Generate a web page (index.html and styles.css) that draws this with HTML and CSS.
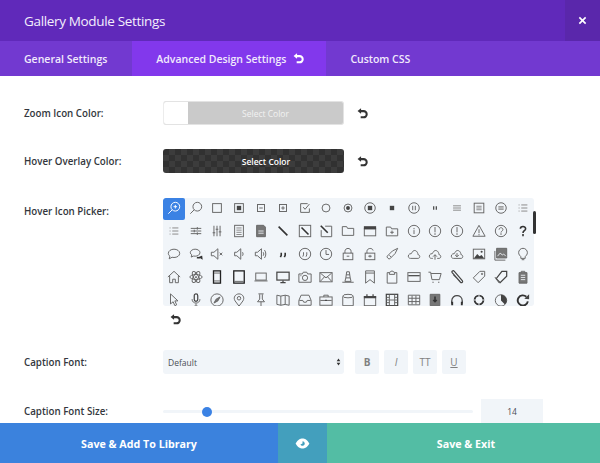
FILE: index.html
```html
<!DOCTYPE html>
<html lang="en">
<head>
<meta charset="utf-8">
<title>Gallery Module Settings</title>
<link rel="stylesheet" href="styles.css">
</head>
<body>
<svg class="defs" aria-hidden="true">
  <symbol id="reset" viewBox="0 0 12 12"><path class="rs" d="M3 3.4h4.200a3.400 3.400 0 0 1 0 6.800H4"/><path class="rf" d="M4.400 .4v6L.6 3.400z"/></symbol>
</svg>
<main class="modal">
  <header class="head">
    <h1 class="title">Gallery Module Settings</h1>
    <button class="close"><svg viewBox="0 0 10 10"><path d="M1.500 1.500l7 7M8.500 1.500l-7 7"/></svg></button>
  </header>
  <nav class="tabs">
    <a class="tab">General Settings</a>
    <a class="tab active">Advanced Design Settings <svg class="tab-reset"><use href="#reset"/></svg></a>
    <a class="tab">Custom CSS</a>
  </nav>
  <section class="body">
    <div class="row">
      <label class="label">Zoom Icon Color:</label>
      <div class="picker light"><span class="swatch"></span><span class="pick-text">Select Color</span></div>
      <svg class="reset"><use href="#reset"/></svg>
    </div>
    <div class="row gap-more">
      <label class="label">Hover Overlay Color:</label>
      <div class="picker dark"><span class="swatch"></span><span class="pick-text">Select Color</span></div>
      <svg class="reset"><use href="#reset"/></svg>
    </div>
    <div class="row top">
      <label class="label">Hover Icon Picker:</label>
      <div class="picker-col">
        <div class="icon-wrap">
        <div class="icons">
          <!-- row 1 -->
          <span class="cell on"><svg viewBox="0 0 16 16"><circle cx="9.500" cy="6.500" r="5"/><path d="M6 10L1.500 14.500M7.500 6.500h4M9.500 4.500v4"/></svg></span>
          <span class="cell"><svg viewBox="0 0 16 16"><circle cx="9.500" cy="6.500" r="5"/><path d="M6 10L1.500 14.500"/></svg></span>
          <span class="cell"><svg viewBox="0 0 16 16"><rect x="3" y="3" width="10" height="10"/></svg></span>
          <span class="cell"><svg viewBox="0 0 16 16"><rect x="3" y="3" width="10" height="10"/><rect class="f" x="5.500" y="5.500" width="5" height="5"/></svg></span>
          <span class="cell"><svg viewBox="0 0 16 16"><rect x="4" y="4" width="8" height="8"/><path d="M6 8h4"/></svg></span>
          <span class="cell"><svg viewBox="0 0 16 16"><rect x="4" y="4" width="8" height="8"/><path d="M6 8h4M8 6v4"/></svg></span>
          <span class="cell"><svg viewBox="0 0 16 16"><path d="M13 8.500V13H3V3h8M6 7l2 2.500 5-6"/></svg></span>
          <span class="cell"><svg viewBox="0 0 16 16"><circle cx="8" cy="8" r="4.500"/></svg></span>
          <span class="cell"><svg viewBox="0 0 16 16"><circle cx="8" cy="8" r="4.500"/><circle class="f" cx="8" cy="8" r="2.200"/></svg></span>
          <span class="cell"><svg viewBox="0 0 16 16"><circle cx="8" cy="8" r="6"/><rect class="f" x="5.500" y="5.500" width="5" height="5"/></svg></span>
          <span class="cell"><svg viewBox="0 0 16 16"><rect class="f" x="5.500" y="5.500" width="5" height="5"/></svg></span>
          <span class="cell"><svg viewBox="0 0 16 16"><circle cx="8" cy="8" r="6"/><path d="M6.500 5.500v5M9.500 5.500v5"/></svg></span>
          <span class="cell"><svg viewBox="0 0 16 16"><path class="h" d="M6.500 6v4M9.500 6v4"/></svg></span>
          <span class="cell"><svg viewBox="0 0 16 16"><path class="lt" d="M3.500 5.500h9M3.500 8h9M3.500 10.500h9"/></svg></span>
          <span class="cell"><svg viewBox="0 0 16 16"><rect x="2.500" y="2.500" width="11" height="11"/><path class="lt" d="M5 6h6M5 8h6M5 10h6"/></svg></span>
          <span class="cell"><svg viewBox="0 0 16 16"><circle cx="8" cy="8" r="6"/><path class="lt" d="M5 6.500h6M5 8h6M5 9.500h6"/></svg></span>
          <span class="cell"><svg viewBox="0 0 16 16"><path class="lt" d="M3 4.500h1M6 4.500h7M3 8h1M6 8h7M3 11.500h1M6 11.500h7"/></svg></span>
          <!-- row 2 -->
          <span class="cell"><svg viewBox="0 0 16 16"><path class="lt" d="M3 4.500h1M6 4.500h7M3 8h1M6 8h7M3 11.500h1M6 11.500h7"/></svg></span>
          <span class="cell"><svg viewBox="0 0 16 16"><path d="M2 5h12M2 8h12M2 11h12"/><path d="M9.500 3.500v3M6 6.500v3M9.500 9.500v3"/></svg></span>
          <span class="cell"><svg viewBox="0 0 16 16"><path d="M4.500 2v12M8 2v12M11.500 2v12M3 10h3M6.500 6h3M10 9h3"/></svg></span>
          <span class="cell"><svg viewBox="0 0 16 16"><rect x="3" y="1.500" width="10" height="13"/><path class="lt" d="M5 4.500h6M5 7h6M5 9.500h6M5 12h6"/></svg></span>
          <span class="cell"><svg viewBox="0 0 16 16"><path class="g" d="M3 1.500h8l2 2v11H3z"/><path class="w" d="M5 8h6M5 10.500h6"/></svg></span>
          <span class="cell"><svg viewBox="0 0 16 16"><path class="b" d="M3 3l10 10"/></svg></span>
          <span class="cell"><svg viewBox="0 0 16 16"><rect x="1.500" y="1.500" width="13" height="13"/><path class="b" d="M4 4l8 8"/></svg></span>
          <span class="cell"><svg viewBox="0 0 16 16"><path d="M7 2.500h7.500v12h-12V7"/><path class="b" d="M2 2l8 8"/></svg></span>
          <span class="cell"><svg viewBox="0 0 16 16"><path d="M1.500 13V3h5l1 2h7v8z"/></svg></span>
          <span class="cell"><svg viewBox="0 0 16 16"><rect x="1.500" y="5.500" width="13" height="8"/><rect class="f" x="1" y="2.500" width="14" height="3.500"/></svg></span>
          <span class="cell"><svg viewBox="0 0 16 16"><path d="M1.500 13.500v-10h5l1 2h7v8zM8 7.500v4M6 9.500h4"/></svg></span>
          <span class="cell"><svg viewBox="0 0 16 16"><circle cx="8" cy="8" r="6.500"/><path d="M8 4.500v1.500M8 7v4.500"/></svg></span>
          <span class="cell"><svg viewBox="0 0 16 16"><circle cx="8" cy="8" r="6.500"/><path d="M8 3.500V9.500M8 10.500v2"/></svg></span>
          <span class="cell"><svg viewBox="0 0 16 16"><circle cx="8" cy="8" r="6.500"/><path d="M8 3.500V9.500M8 10.500v2"/></svg></span>
          <span class="cell"><svg viewBox="0 0 16 16"><path d="M8 1.500L15 14H1zM8 6v4.500M8 11.500v1.500"/></svg></span>
          <span class="cell"><svg viewBox="0 0 16 16"><circle cx="8" cy="8" r="6.500"/><path d="M5.800 6.500c0-3 4.400-3 4.400-.1 0 1.700-2.200 1.600-2.200 3.400M8 10.500v2"/></svg></span>
          <span class="cell"><svg viewBox="0 0 16 16"><path class="b" d="M5 5.500c0-3.600 6-3.600 6-.1 0 2.300-3 2.200-3 4.800M8 11.500v2.500"/></svg></span>
          <!-- row 3 -->
          <span class="cell"><svg viewBox="0 0 16 16"><path d="M8 2.500c3.500 0 6.500 2 6.500 4.800S11.500 12 8 12c-.8 0-1.500-.1-2.200-.3L2.500 13.500l.8-3C2.200 9.600 1.500 8.500 1.500 7.300 1.500 4.500 4.500 2.500 8 2.500z"/></svg></span>
          <span class="cell"><svg viewBox="0 0 16 16"><path d="M7 2.500c3 0 5.500 1.700 5.500 4S10 10.500 7 10.500c-.6 0-1.100 0-1.600-.2L2.500 11.500l.7-2.500C2.100 8.300 1.500 7.500 1.500 6.500c0-2.300 2.500-4 5.500-4z"/><path class="b" d="M9 12c1.500.4 3 .2 4-.3l1.500 1-.3-2.500"/></svg></span>
          <span class="cell"><svg viewBox="0 0 16 16"><path d="M1.500 6H4.500L9 2v12L4.500 10H1.500zM11 6.500l3 3M14 6.500l-3 3"/></svg></span>
          <span class="cell"><svg viewBox="0 0 16 16"><path d="M3 6H5.500L10 2v12L5.500 10H3zM12 6c.8 1.200.8 2.800 0 4"/></svg></span>
          <span class="cell"><svg viewBox="0 0 16 16"><path d="M1.500 6H4L8.500 2v12L4 10H1.500zM10.500 6c.8 1.200.8 2.800 0 4M12 3.500c2 2.500 2 6.500 0 9"/></svg></span>
          <span class="cell"><svg viewBox="0 0 16 16"><path class="b" d="M6 6.500v3L5 11.500M10.500 6.500v3l-1 2"/></svg></span>
          <span class="cell"><svg viewBox="0 0 16 16"><circle cx="8" cy="8" r="6.500"/><path d="M6.300 6v3L5.500 11M10 6v3l-.8 2"/></svg></span>
          <span class="cell"><svg viewBox="0 0 16 16"><circle cx="8" cy="8" r="6.500"/><path d="M8 3.500V8.500h3.500"/></svg></span>
          <span class="cell"><svg viewBox="0 0 16 16"><rect x="2.500" y="7" width="11" height="7.500"/><path d="M4.500 7V5c0-4.500 7-4.500 7 0v2M6.500 10.500h3"/></svg></span>
          <span class="cell"><svg viewBox="0 0 16 16"><rect x="2.500" y="7" width="11" height="7.500"/><path d="M4.500 7V5c0-4 6.300-4.500 7-1M6 10.500h4M8 9v3"/></svg></span>
          <span class="cell"><svg viewBox="0 0 16 16"><path d="M14.500 1.500L8.500 4.500 2.500 10.500c-1 1 2 4 3 3l6-6zM5 9.500l2 2"/></svg></span>
          <span class="cell"><svg viewBox="0 0 16 16"><path d="M4 13h8.500c2.800 0 2.800-4 0-4.300C12.500 5.500 9.500 2.500 6.800 4.800 5.500 6 5.500 7 5 7.500 .5 7.500 .5 13 4 13z"/></svg></span>
          <span class="cell"><svg viewBox="0 0 16 16"><path d="M5.500 13H4C.5 13 .5 7.500 5 7.500c.5-.5.5-1.500 1.800-2.700 2.700-2.300 5.700.7 5.700 3.900 2.800.3 2.800 4.300 0 4.300h-2M8 14.500V9M5.800 11L8 8.800l2.200 2.200"/></svg></span>
          <span class="cell"><svg viewBox="0 0 16 16"><path d="M4 13C.5 13 .5 7.500 5 7.500c.5-.5.5-1.500 1.800-2.700 2.700-2.300 5.700.7 5.700 3.900 2.800.3 2.800 4.300 0 4.300zM8 7v4M5.800 9L8 11.200 10.200 9"/></svg></span>
          <span class="cell"><svg viewBox="0 0 16 16"><rect x="1.500" y="2.500" width="13" height="11"/><path class="f" d="M2 13l4-5 2.500 2.500L11 9l3 4z"/><circle class="f" cx="11" cy="5.500" r="1.200"/></svg></span>
          <span class="cell"><svg viewBox="0 0 16 16"><path class="g" d="M3 1.500h11.500v11H3z"/><path class="w" d="M4 10.500l3-3.500 2.500 2 1.500-1 2.500 2.500"/><path d="M1 4.500v10.500h12"/></svg></span>
          <span class="cell"><svg viewBox="0 0 16 16"><path d="M5.500 11C4.500 10 3 8.500 3 6.500a5 5 0 0 1 10 0c0 2-1.500 3.500-2.500 4.500v2h-5zM6.500 14.500h3"/></svg></span>
          <!-- row 4 -->
          <span class="cell"><svg viewBox="0 0 16 16"><path d="M8 1.500L15 8M8 1.500L1 8M3 6.500v8h3.500v-4h3v4H13v-8"/></svg></span>
          <span class="cell"><svg viewBox="0 0 16 16"><ellipse cx="8" cy="8" rx="7" ry="2.800"/><ellipse cx="8" cy="8" rx="7" ry="2.800" transform="rotate(60 8 8)"/><ellipse cx="8" cy="8" rx="7" ry="2.800" transform="rotate(120 8 8)"/><circle class="f" cx="8" cy="8" r="1"/></svg></span>
          <span class="cell"><svg viewBox="0 0 16 16"><rect class="h1" x="4" y="1" width="8" height="14"/><path d="M4.500 3.500h7M4.500 12.500h7"/></svg></span>
          <span class="cell"><svg viewBox="0 0 16 16"><rect class="h1" x="2" y="1" width="12" height="14"/><path d="M2.500 13h11"/></svg></span>
          <span class="cell"><svg viewBox="0 0 16 16"><rect x="2" y="3.500" width="12" height="8"/><path d="M.5 12.500h15"/></svg></span>
          <span class="cell"><svg viewBox="0 0 16 16"><rect class="h" x="1" y="2.500" width="14" height="9"/><path class="h" d="M8 12v2M5 14.500h6"/></svg></span>
          <span class="cell"><svg viewBox="0 0 16 16"><path d="M1 4.500h4l1-2h4l1 2h4v9.500H1z"/><circle cx="8" cy="9" r="3"/><path class="lt" d="M2.500 6.500h1.500"/></svg></span>
          <span class="cell"><svg viewBox="0 0 16 16"><rect x="1" y="3" width="14" height="10.500"/><path d="M1.500 3.500L8 9l6.500-5.500M1.500 13l5-5.500M14.500 13l-5-5.500"/></svg></span>
          <span class="cell"><svg viewBox="0 0 16 16"><path d="M6.500 2h3l1 7h-5zM5.500 9l-1 4h7l-1-4M1.500 14h13M6 5.500h4"/></svg></span>
          <span class="cell"><svg viewBox="0 0 16 16"><path d="M3 1h10v14l-5-4-5 4zM3 3.500h10"/></svg></span>
          <span class="cell"><svg viewBox="0 0 16 16"><path d="M5 3H2.500v12h11V3H11M5 5V2.800L8 1l3 1.800V5z"/></svg></span>
          <span class="cell"><svg viewBox="0 0 16 16"><rect x="1" y="3" width="14" height="10"/><path class="h" d="M1.500 6.500h13"/></svg></span>
          <span class="cell"><svg viewBox="0 0 16 16"><path d="M.5 2.500H3L4.500 11h8.500l2-7H3.500M5 14h1.500M11.500 14H13"/></svg></span>
          <span class="cell"><svg viewBox="0 0 16 16"><path class="h" d="M2.500 3l9.500 11c1.500 1.500 3-.5 2-2L5 1.500C3.500 0 1.500 1.500 2.500 3zM4 5.500l7 7"/></svg></span>
          <span class="cell"><svg viewBox="0 0 16 16"><path d="M9 1.500h5.500V7L7 14.500 1.500 9z"/><circle cx="11.500" cy="4.500" r=".8"/></svg></span>
          <span class="cell"><svg viewBox="0 0 16 16"><path class="h" d="M9 1.500h5.500V7L7 14.500 2.500 10z"/><path d="M1 8l5 7"/></svg></span>
          <span class="cell"><svg viewBox="0 0 16 16"><path class="g" d="M3.500 3h9v12h-9z"/><path d="M6 3V1.500h4V3"/><path class="w" d="M5.500 6h5M5.500 8.500h5M5.500 11h5"/></svg></span>
          <!-- row 5 -->
          <span class="cell"><svg viewBox="0 0 16 16"><path d="M4 1l8.500 8H9l2 4.500-2 1-2-4.500-3 2.500z"/></svg></span>
          <span class="cell"><svg viewBox="0 0 16 16"><rect class="h" x="6" y="1" width="4" height="8.500" rx="2"/><path d="M3.500 7c0 6 9 6 9 0M8 12v3M6 15h4"/></svg></span>
          <span class="cell"><svg viewBox="0 0 16 16"><circle cx="8" cy="8" r="7"/><path class="g" d="M11.500 4.500L9 9 4.500 11.500 7 7z"/></svg></span>
          <span class="cell"><svg viewBox="0 0 16 16"><path d="M8 15L3.500 9C1 5 4 1 8 1s7 4 4.500 8z"/><circle cx="8" cy="6" r="2"/></svg></span>
          <span class="cell"><svg viewBox="0 0 16 16"><path d="M5 1h6M6.500 1.500v5.500L4 10h8L9.500 7V1.500M8 10v5"/></svg></span>
          <span class="cell"><svg viewBox="0 0 16 16"><path d="M1 2.500l4.500 1 5-1 4.500 1V14l-4.500-1-5 1L1 13zM5.500 3.500V14M10.500 2.500V13"/></svg></span>
          <span class="cell"><svg viewBox="0 0 16 16"><path d="M1 8.500l2.500-6h9l2.500 6V14H1zM1.500 8.500h4l1 2h3l1-2h4"/></svg></span>
          <span class="cell"><svg viewBox="0 0 16 16"><rect x="1" y="4.500" width="14" height="9.500"/><path d="M5.500 4.500v-2h5v2M1.500 8.500h13"/><path class="h" d="M7 8.500h2"/></svg></span>
          <span class="cell"><svg viewBox="0 0 16 16"><path d="M2 4v10.500h12V4"/><ellipse cx="8" cy="3.500" rx="6" ry="2"/></svg></span>
          <span class="cell"><svg viewBox="0 0 16 16"><rect x="1.500" y="4" width="13" height="10.500"/><rect class="f" x="1" y="3.500" width="14" height="2.500"/><path class="h" d="M4.500 1.500V4M11.500 1.500V4"/></svg></span>
          <span class="cell"><svg viewBox="0 0 16 16"><rect class="h" x="1.500" y="1.500" width="13" height="13"/><path d="M5 2v12M11 2v12M5.500 8h5M2 5h3M2 8h3M2 11h3M11 5h3M11 8h3M11 11h3"/></svg></span>
          <span class="cell"><svg viewBox="0 0 16 16"><path d="M1.500 2.500h13v11h-13zM1.500 6h13M1.500 9.800h13M5.800 3v10M10.200 3v10"/></svg></span>
          <span class="cell"><svg viewBox="0 0 16 16"><path class="g" d="M2.500 1.500h11v13h-11z"/><path class="b" d="M8 4v5.500M6 8l2 2 2-2"/></svg></span>
          <span class="cell"><svg viewBox="0 0 16 16"><path class="h" d="M2 12V9c0-8 12-8 12 0v3"/><path class="h2" d="M2.500 10v4M13.500 10v4"/></svg></span>
          <span class="cell"><svg viewBox="0 0 16 16"><circle class="h2" cx="8" cy="8" r="5"/><path class="w" d="M8 1.500V5M8 11v3.500M1.500 8H5M11 8h3.500"/></svg></span>
          <span class="cell"><svg viewBox="0 0 16 16"><circle cx="8" cy="8.500" r="6.500"/><path class="f" d="M8 8.500V2a6.500 6.500 0 0 1 4.500 11.200z"/></svg></span>
          <span class="cell"><svg viewBox="0 0 16 16"><path class="h2" d="M13.500 9.500a5.800 5.800 0 1 1-1.700-5.200"/><path class="f" d="M9.500 6.500L15 7V1.500z"/></svg></span>
        </div>
        </div>
        <svg class="reset below"><use href="#reset"/></svg>
      </div>
      <span class="scroll"></span>
    </div>
    <div class="row font-row">
      <label class="label">Caption Font:</label>
      <div class="select"><span>Default</span><svg viewBox="0 0 6 10"><path d="M3 .5l2.300 3.500H.7zM3 9.500L.7 6h4.600z"/></svg></div>
      <div class="styles">
        <span class="style bold">B</span>
        <span class="style italic">I</span>
        <span class="style">TT</span>
        <span class="style under">U</span>
      </div>
    </div>
    <div class="row">
      <label class="label">Caption Font Size:</label>
      <div class="slider"><span class="knob"></span></div>
      <div class="num">14</div>
    </div>
  </section>
  <footer class="foot">
    <a class="btn lib">Save &amp; Add To Library</a>
    <a class="btn eye"><svg viewBox="0 0 16 12"><path class="eye-w" d="M.5 6C3 1.500 5.500.5 8 .5s5 1 7.500 5.500C13 10.500 10.500 11.500 8 11.500S3 10.500.5 6z"/><path class="eye-d" d="M8 3.500A2.500 2.500 0 1 1 5.700 7L8 6z"/></svg></a>
    <a class="btn exit">Save &amp; Exit</a>
  </footer>
</main>
</body>
</html>
```
FILE: styles.css
```css
* { box-sizing: border-box; }
html, body { margin: 0; height: 100%; }
body { font-family: "Open Sans", sans-serif; background: #fff; overflow: hidden; }
.defs { display: none; }
.rs { fill: none; stroke: currentColor; stroke-width: 2.200; }
.rf { fill: currentColor; }

.modal { width: 600px; height: 463px; display: flex; flex-direction: column; overflow: hidden; }

.head { height: 41px; flex: none; display: flex; justify-content: space-between; align-items: stretch; background: #6029ba; }
.title { margin: 0; padding-left: 24px; font-size: 13.500px; font-weight: 400; letter-spacing: -.34px; line-height: 43px; color: #f3eefc; }
.close { width: 35px; padding: 0; border: 0; background: #5a27ab; display: flex; align-items: center; justify-content: center; }
.close svg { width: 9px; height: 9px; fill: none; stroke: #fff; stroke-width: 1.800; }

.tabs { height: 35px; flex: none; display: flex; background: #7239d0; }
.tab { display: flex; align-items: center; gap: 7px; padding: 0 24px; font-size: 10.500px; font-weight: 600; color: #f1eafc; }
.tab:first-child { padding-right: 25px; }
.tab.active { padding-right: 22px; background: #8238ec; }
.tab-reset { width: 11px; height: 11px; color: #fff; }

.body { flex: 1; min-height: 0; overflow: hidden; padding: 25px 0 0 24px; }
.row { display: flex; align-items: center; margin-bottom: 24px; height: 24px; position: relative; }
.row.gap-more { margin-bottom: 25px; }
.row.top { align-items: flex-start; height: auto; margin-bottom: 25px; }
.row.font-row { margin-bottom: 25px; }
.label { width: 139px; flex: none; padding-top: 2px; font-size: 9.750px; font-weight: 600; line-height: 24px; color: #33373d; }

.picker { width: 181px; height: 24px; display: flex; border-radius: 3px; overflow: hidden; font-size: 8.500px; font-weight: 600; color: #fff; }
.swatch { width: 25px; flex: none; }
.pick-text { flex: 1; display: flex; align-items: center; justify-content: center; }
.light { background: #cacaca; border: 1px solid #e3e3e3; border-left-color: #ececec; }
.light .swatch { background: #fff; width: 24px; }
.light .pick-text { color: #f2f2f2; font-weight: 400; }
.dark { background: #363636 conic-gradient(#3c3c3c 25%, #313131 0 50%, #3c3c3c 0 75%, #313131 0) 0 0 / 12px 12px; }

.reset { width: 11px; height: 11px; margin-left: 13px; color: #333; }

.picker-col { display: flex; flex-direction: column; }
.icon-wrap { width: 371px; height: 108px; overflow: hidden; background: #f1f5f9; border-radius: 3px; }
.icons { display: grid; grid-template-columns: repeat(17, 21.800px); grid-auto-rows: 23px; }
.cell { display: flex; justify-content: center; align-items: flex-start; padding-top: 3px; }
.cell.on { background: #3b82e4; height: 22px; border-radius: 2px; padding-top: 3px; }
.cell svg { width: 14px; height: 14px; fill: none; stroke: #666; stroke-width: 1.100; }
.cell.on svg { stroke: #fff; }
.cell .f { fill: #444; stroke: none; }
.cell .g { fill: #777; stroke: #666; }
.cell .w { stroke: #f1f5f9; stroke-width: 1; fill: none; }
.cell .b { stroke: #333; stroke-width: 1.800; }
.cell .h { stroke: #444; stroke-width: 1.400; }
.cell .h1 { stroke: #222; stroke-width: 1.500; }
.cell .h2 { stroke: #333; stroke-width: 2.200; }
.cell .lt { stroke: #888; }
.reset.below { margin: 8px 0 0 7px; flex: none; }
.scroll { position: absolute; left: 509px; top: 13px; width: 3px; height: 23px; background: #333; border-radius: 2px; }

.select { width: 181px; height: 24px; display: flex; align-items: center; justify-content: space-between; padding: 0 3px 0 5px; background: #f1f5f9; border-radius: 3px; font-size: 8.500px; color: #4a4e55; }
.select svg { width: 5px; height: 8px; fill: #333; }
.styles { display: flex; gap: 5px; margin-left: 11px; }
.style { width: 24px; height: 24px; display: flex; align-items: center; justify-content: center; background: #f1f5f9; border-radius: 2px; font-size: 10px; color: #808080; }
.bold { font-weight: 700; }
.italic { font-style: italic; }
.under { text-decoration: underline; }

.slider { width: 310px; height: 3px; background: #f1f5f9; position: relative; border-radius: 2px; }
.knob { position: absolute; left: 39px; top: -3px; width: 10px; height: 10px; border-radius: 50%; background: #3b82e4; }
.num { width: 62px; height: 24px; margin-left: 8px; display: flex; align-items: center; justify-content: center; background: #f1f5f9; font-size: 8.500px; color: #4a4e55; }

.foot { height: 40px; flex: none; display: flex; position: relative; }
.btn { display: flex; align-items: center; justify-content: center; padding-top: 1px; font-size: 10.700px; font-weight: 700; color: #fff; }
.lib { width: 278px; background: #3b82dd; }
.eye { width: 49px; padding-top: 0; background: #439fbd; }
.eye svg { width: 15px; height: 11px; }
.eye-w { fill: #fff; }
.eye-d { fill: #439fbd; }
.exit { flex: 1; padding-left: 5px; background: #53bda4; }
```
